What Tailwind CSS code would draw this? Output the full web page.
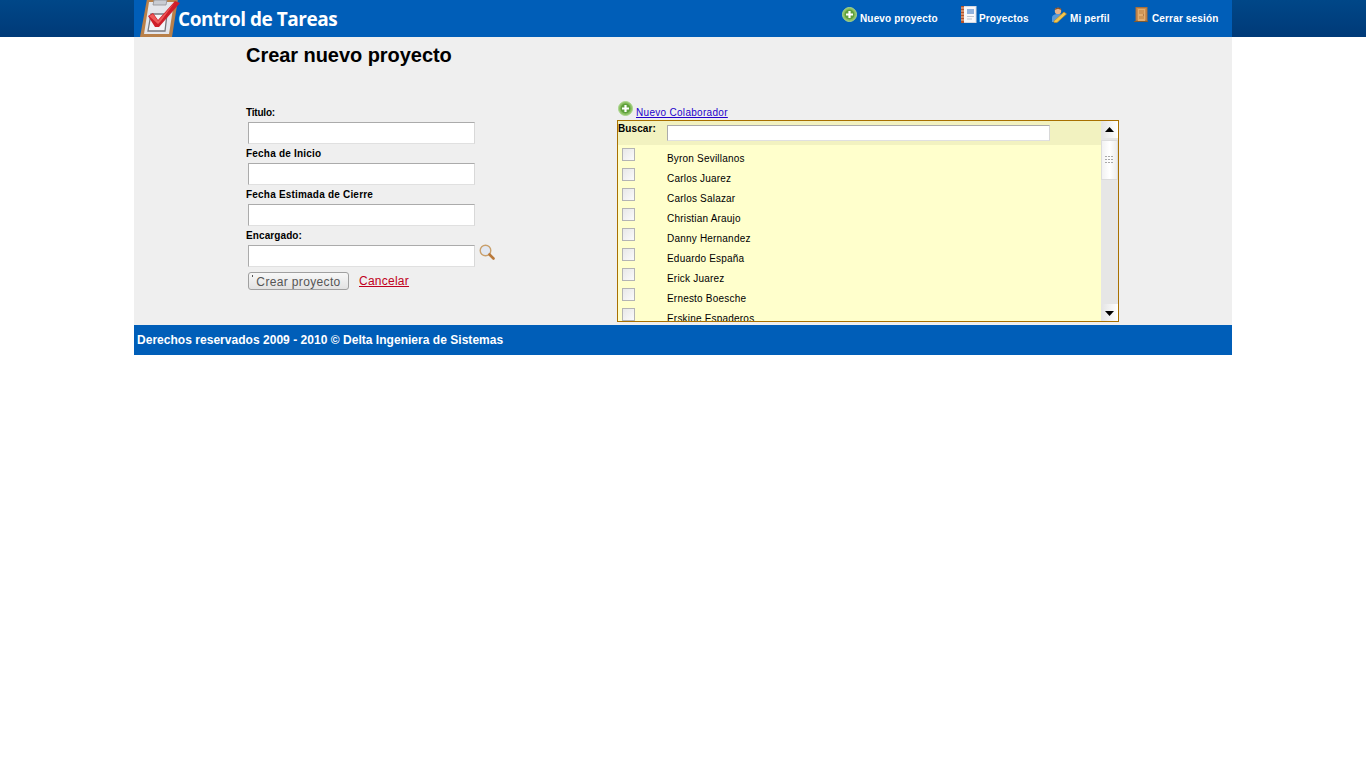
<!doctype html>
<html lang="es">
<head>
<meta charset="utf-8">
<title>Crear nuevo proyecto</title>
<script src="https://cdn.jsdelivr.net/npm/@tailwindcss/browser@4"></script>
</head>
<body class="bg-white font-['Liberation_Sans',Arial,sans-serif]">
<div class="bg-gradient-to-b from-[#004788] to-[#003a78]">
  <header class="mx-auto w-[1098px] h-[37px] bg-[#005eb8] flex items-start justify-between overflow-hidden">
    <div class="flex items-start pl-[5px]">
      <svg width="41" height="38" viewBox="0 0 41 38" class="shrink-0">
        <path d="M8 -1H39L33 37H1Z" fill="#b98049"/>
        <path d="M10 2H35L30 34H5Z" fill="#e4e6ec"/>
        <path d="M15 0H28L27 5H14Z" fill="#c9ccd3" stroke="#8f8f95" stroke-width=".8"/>
        <path d="M12 14H28L26 31H9Z" fill="#f4f5f8" stroke="#77777c" stroke-width="1.3"/>
        <path d="M9 16L14 13L19 20L36 1L41 3L20 27H16Z" fill="#cf1f2a"/>
        <path d="M10 16L14 14L19 21L36 2L22 21L19 24Z" fill="#ee5a5a"/>
      </svg>
      <span class="-ml-[2px] mt-[6px] font-['Open_Sans',sans-serif] font-bold text-[19px] leading-[26px] tracking-[-0.47px] text-white">Control de Tareas</span>
    </div>
    <nav class="flex items-start w-[390px] text-[10px] font-bold text-white leading-[13px] tracking-[0.15px] pr-[13px]">
      <a class="flex items-start mt-[6px] w-[119px]">
        <svg width="16" height="16" viewBox="0 0 16 16" class="shrink-0 mt-[1px] mr-[2px]"><circle cx="7.5" cy="7.5" r="7" fill="#8cc063" stroke="#a9d68b"/><circle cx="7.5" cy="7.5" r="5" fill="#5fa03c"/><path d="M7.5 4v7M4 7.5h7" stroke="#fff" stroke-width="2.2"/></svg>
        <span class="mt-[6px]">Nuevo proyecto</span>
      </a>
      <a class="flex items-start mt-[0px] w-[90px]">
        <svg width="16" height="17" viewBox="0 0 16 17" class="shrink-0 mt-[6px] mr-[2px]"><rect x="1" y="0.5" width="14" height="16" fill="#f7f8fb" stroke="#d7d9e0"/><path d="M1.5 0v17" stroke="#b5532a" stroke-width="3"/><path d="M0 2h3M0 5h3M0 8h3M0 11h3M0 14h3" stroke="#f0c8a8"/><rect x="6" y="3" width="7" height="5" fill="#8fb2dd"/><path d="M6 10.5h7M6 13h5" stroke="#c0c5cf"/></svg>
        <span class="mt-[12px]">Proyectos</span>
      </a>
      <a class="flex items-start mt-[6px] w-[83px]">
        <svg width="17" height="16" viewBox="1 0 17 16" class="shrink-0 mt-[1px] mr-[2px]"><circle cx="8" cy="4" r="3.2" fill="#e8b48a"/><path d="M4.5 3C5 -.5 11.5 -.5 11.5 3L8 1.8Z" fill="#8a4f22"/><path d="M2 11c0-3 2.500-4 6-4s4 1 4 2l-4 6H2Z" fill="#5a9ad8"/><path d="M4 14L14 5l2.500 2L7 15.500H4Z" fill="#f3c64e" stroke="#c08c22" stroke-width=".7"/></svg>
        <span class="mt-[6px]">Mi perfil</span>
      </a>
      <a class="flex items-start mt-[6px]">
        <svg width="16" height="16" viewBox="0 0 16 16" class="shrink-0 mt-[1px] mr-[2px]"><rect x="2" y="0.5" width="11" height="13.500" fill="#c98d50" stroke="#a96f38"/><rect x="4" y="2" width="7" height="12" fill="#e2ad6e"/><rect x="5" y="3" width="5" height="4" fill="#cf9656"/><rect x="5" y="9" width="5" height="3" fill="#cf9656"/><rect x="9" y="7.500" width="1" height="1" fill="#7d4f24"/><path d="M0 14.500h14" stroke="#7d5a34"/></svg>
        <span class="mt-[6px]">Cerrar sesión</span>
      </a>
    </nav>
  </header>
</div>
<main class="mx-auto w-[1098px] h-[288px] bg-[#efefef] pl-[112px]">
  <h1 class="pt-[7px] h-[63px] text-[20px] leading-[23px] tracking-[-0.05px] font-bold text-black">Crear nuevo proyecto</h1>
  <div class="flex items-start">
    <form class="w-[371px] pt-[7px] text-[10px] font-bold leading-[12px] tracking-[0.2px] text-black">
      <label class="block h-[15px] tracking-[-0.2px]">Titulo:</label>
      <div class="ml-[2px] mb-[3px] w-[227px] h-[22px] bg-white border border-[#ababab] border-r-[#d8d8d8] border-b-[#e0e0e0]"></div>
      <label class="block h-[16px] pt-[1px]">Fecha de Inicio</label>
      <div class="ml-[2px] mb-[3px] w-[227px] h-[22px] bg-white border border-[#ababab] border-r-[#d8d8d8] border-b-[#e0e0e0]"></div>
      <label class="block h-[16px] pt-[1px]">Fecha Estimada de Cierre</label>
      <div class="ml-[2px] mb-[3px] w-[227px] h-[22px] bg-white border border-[#ababab] border-r-[#d8d8d8] border-b-[#e0e0e0]"></div>
      <label class="block h-[16px] pt-[1px] tracking-[0.1px]">Encargado:</label>
      <div class="flex items-start ml-[2px] mb-[5px]">
        <div class="w-[227px] h-[22px] bg-white border border-[#ababab] border-r-[#d8d8d8] border-b-[#e0e0e0]"></div>
        <svg width="16" height="17" viewBox="0 0 16 17" class="ml-[4px] -mt-[1px]"><circle cx="6.500" cy="6.500" r="5.300" fill="#e2e8f2" stroke="#c9a06c" stroke-width="1.400"/><path d="M10.500 10.500l4 4" stroke="#b9793a" stroke-width="2.600" stroke-linecap="round"/></svg>
      </div>
      <div class="flex items-center ml-[2px] font-normal tracking-[0.35px]">
        <div class="relative w-[101px] h-[18px] rounded-[3px] border border-[#a0a0a0] bg-gradient-to-b from-[#f8f8f8] to-[#e2e2e2] text-center text-[12px] leading-[18px] text-[#555]">
          <span class="absolute left-[3px] top-[2px] w-[1px] h-[2px] bg-[#555]"></span>Crear proyecto</div>
        <a class="ml-[10px] text-[12px] leading-[14px] tracking-[0.25px] text-[#c00020] underline">Cancelar</a>
      </div>
    </form>
    <section>
      <a class="flex items-end h-[20px] text-[10px] leading-[12px] tracking-[0.3px] text-[#2200cc] underline">
        <svg width="16" height="16" viewBox="0 0 16 16" class="shrink-0 mb-[3px] ml-[1px] mr-[2px]"><circle cx="7.500" cy="7.500" r="7" fill="#8cc063" stroke="#a9d68b"/><circle cx="7.500" cy="7.500" r="5" fill="#5fa03c"/><path d="M7.500 4v7M4 7.500h7" stroke="#fff" stroke-width="2.200"/></svg>
        <span class="mb-[1px]">Nuevo Colaborador</span>
      </a>
      <div class="flex w-[502px] h-[202px] border border-[#a87000] bg-[#ffffcc] overflow-hidden">
        <div class="w-[483px] overflow-hidden">
          <div class="flex items-start h-[24px] bg-[#f2f2c0] text-[10px] font-bold leading-[12px] tracking-[0.1px] text-black">
            <span class="w-[49px] pt-[2px]">Buscar:</span>
            <div class="mt-[4px] w-[383px] h-[16px] bg-white border border-[#ababab] border-r-[#d8d8d8] border-b-[#e0e0e0]"></div>
          </div>
          <ul class="pt-[2px] text-[10px] leading-[20px] tracking-[0.2px] text-black">
            <li class="flex h-[20px]"><span class="mt-[1px] ml-[4px] mr-[32px] w-[13px] h-[13px] border border-[#b4b4b4] bg-gradient-to-br from-[#e8e8e8] to-[#fbfbfb]"></span><span class="pt-[2px]">Byron Sevillanos</span></li>
            <li class="flex h-[20px]"><span class="mt-[1px] ml-[4px] mr-[32px] w-[13px] h-[13px] border border-[#b4b4b4] bg-gradient-to-br from-[#e8e8e8] to-[#fbfbfb]"></span><span class="pt-[2px]">Carlos Juarez</span></li>
            <li class="flex h-[20px]"><span class="mt-[1px] ml-[4px] mr-[32px] w-[13px] h-[13px] border border-[#b4b4b4] bg-gradient-to-br from-[#e8e8e8] to-[#fbfbfb]"></span><span class="pt-[2px]">Carlos Salazar</span></li>
            <li class="flex h-[20px]"><span class="mt-[1px] ml-[4px] mr-[32px] w-[13px] h-[13px] border border-[#b4b4b4] bg-gradient-to-br from-[#e8e8e8] to-[#fbfbfb]"></span><span class="pt-[2px]">Christian Araujo</span></li>
            <li class="flex h-[20px]"><span class="mt-[1px] ml-[4px] mr-[32px] w-[13px] h-[13px] border border-[#b4b4b4] bg-gradient-to-br from-[#e8e8e8] to-[#fbfbfb]"></span><span class="pt-[2px]">Danny Hernandez</span></li>
            <li class="flex h-[20px]"><span class="mt-[1px] ml-[4px] mr-[32px] w-[13px] h-[13px] border border-[#b4b4b4] bg-gradient-to-br from-[#e8e8e8] to-[#fbfbfb]"></span><span class="pt-[2px]">Eduardo España</span></li>
            <li class="flex h-[20px]"><span class="mt-[1px] ml-[4px] mr-[32px] w-[13px] h-[13px] border border-[#b4b4b4] bg-gradient-to-br from-[#e8e8e8] to-[#fbfbfb]"></span><span class="pt-[2px]">Erick Juarez</span></li>
            <li class="flex h-[20px]"><span class="mt-[1px] ml-[4px] mr-[32px] w-[13px] h-[13px] border border-[#b4b4b4] bg-gradient-to-br from-[#e8e8e8] to-[#fbfbfb]"></span><span class="pt-[2px]">Ernesto Boesche</span></li>
            <li class="flex h-[20px]"><span class="mt-[1px] ml-[4px] mr-[32px] w-[13px] h-[13px] border border-[#b4b4b4] bg-gradient-to-br from-[#e8e8e8] to-[#fbfbfb]"></span><span class="pt-[2px]">Erskine Espaderos</span></li>
          </ul>
        </div>
        <div class="w-[17px] flex flex-col bg-[#e6e6e6]">
          <div class="h-[17px] bg-gradient-to-r from-[#e4e4e4] to-[#ffffff] flex items-center justify-center"><svg width="9" height="5" viewBox="0 0 9 5"><path d="M4.500 0L9 5H0Z" fill="#000"/></svg></div>
          <div class="mt-[2px] h-[40px] border border-[#dcdcdc] bg-gradient-to-r from-[#f2f2f2] via-[#ffffff] to-[#ececec] flex items-center justify-center">
            <svg width="9" height="8" viewBox="0 0 9 8" fill="#a8a8a8"><rect x="0" y="0" width="2" height="1"/><rect x="3" y="0" width="2" height="1"/><rect x="6" y="0" width="2" height="1"/><rect x="0" y="3" width="2" height="1"/><rect x="3" y="3" width="2" height="1"/><rect x="6" y="3" width="2" height="1"/><rect x="0" y="6" width="2" height="1"/><rect x="3" y="6" width="2" height="1"/><rect x="6" y="6" width="2" height="1"/></svg>
          </div>
          <div class="flex-1"></div>
          <div class="h-[17px] pt-[2px] bg-gradient-to-r from-[#e4e4e4] to-[#ffffff] flex items-center justify-center"><svg width="9" height="5" viewBox="0 0 9 5"><path d="M0 0H9L4.500 5Z" fill="#000"/></svg></div>
        </div>
      </div>
    </section>
  </div>
</main>
<footer class="mx-auto w-[1098px] h-[30px] bg-[#005eb8] pl-[3px] text-[12px] leading-[30px] tracking-[0.03px] font-bold text-white">Derechos reservados 2009 - 2010 © Delta Ingeniera de Sistemas</footer>
</body>
</html>
